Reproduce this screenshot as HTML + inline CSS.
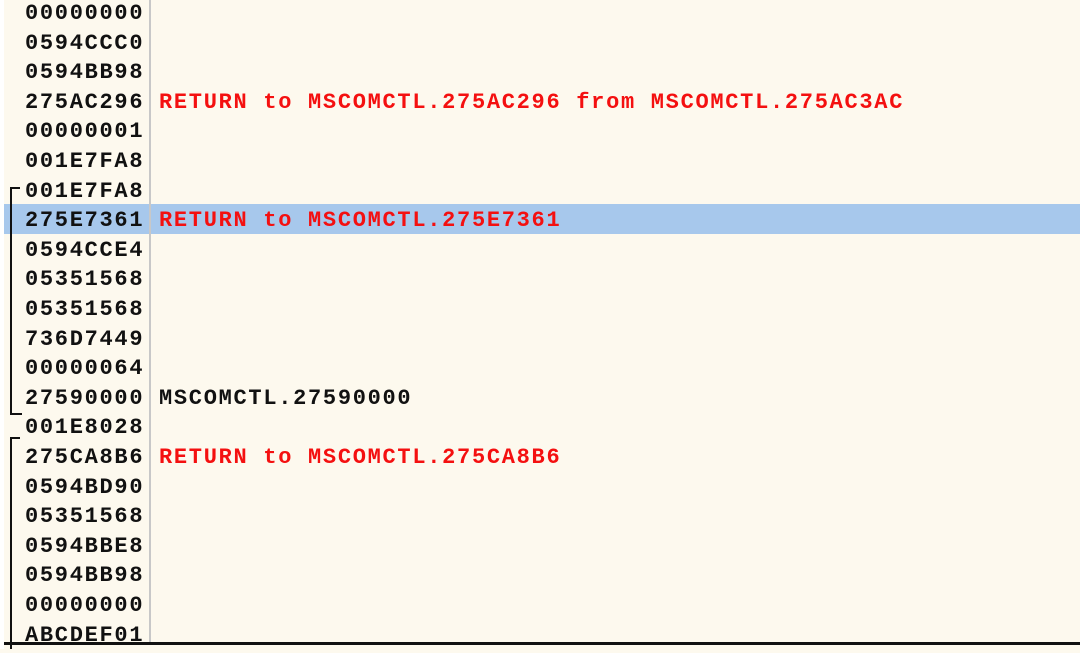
<!DOCTYPE html><html><head><style>
body{margin:0;width:1080px;height:649px;background:#fdf9ee;overflow:hidden;position:relative;font-family:"Liberation Mono",monospace;font-weight:bold;font-size:22px;}
.r{position:absolute;left:0;width:1080px;height:30px;line-height:34px;white-space:pre;letter-spacing:1.7px}
.a{position:absolute;left:25px;color:#111}
.c{position:absolute;left:159px;color:#111}
.red{color:#f41010}
.hl{background:#a7c8ec}
.sep{position:absolute;left:149px;top:0;width:2px;height:642px;background:#c8c8c8}
.b{position:absolute;background:#111}
</style></head><body>
<div class="r" style="top:-3px"><span class="a">00000000</span></div>
<div class="r" style="top:26.6px"><span class="a">0594CCC0</span></div>
<div class="r" style="top:56.2px"><span class="a">0594BB98</span></div>
<div class="r" style="top:85.8px"><span class="a">275AC296</span><span class="c red">RETURN to MSCOMCTL.275AC296 from MSCOMCTL.275AC3AC</span></div>
<div class="r" style="top:115.4px"><span class="a">00000001</span></div>
<div class="r" style="top:145px"><span class="a">001E7FA8</span></div>
<div class="r" style="top:174.6px"><span class="a">001E7FA8</span></div>
<div class="r hl" style="top:204.2px;left:4px;width:1076px;height:30px;overflow:hidden"><span class="a" style="left:21px">275E7361</span><span class="c red" style="left:155px">RETURN to MSCOMCTL.275E7361</span></div>
<div class="r" style="top:233.8px"><span class="a">0594CCE4</span></div>
<div class="r" style="top:263.4px"><span class="a">05351568</span></div>
<div class="r" style="top:293px"><span class="a">05351568</span></div>
<div class="r" style="top:322.6px"><span class="a">736D7449</span></div>
<div class="r" style="top:352.2px"><span class="a">00000064</span></div>
<div class="r" style="top:381.8px"><span class="a">27590000</span><span class="c">MSCOMCTL.27590000</span></div>
<div class="r" style="top:411.4px"><span class="a">001E8028</span></div>
<div class="r" style="top:441px"><span class="a">275CA8B6</span><span class="c red">RETURN to MSCOMCTL.275CA8B6</span></div>
<div class="r" style="top:470.6px"><span class="a">0594BD90</span></div>
<div class="r" style="top:500.2px"><span class="a">05351568</span></div>
<div class="r" style="top:529.8px"><span class="a">0594BBE8</span></div>
<div class="r" style="top:559.4px"><span class="a">0594BB98</span></div>
<div class="r" style="top:589px"><span class="a">00000000</span></div>
<div class="r" style="top:618.6px"><span class="a">ABCDEF01</span></div>
<div class="sep"></div>
<div class="b" style="left:10px;top:187px;width:2px;height:228px"></div>
<div class="b" style="left:10px;top:187px;width:10px;height:2px"></div>
<div class="b" style="left:10px;top:413px;width:12px;height:2px"></div>
<div class="b" style="left:10px;top:437px;width:2px;height:212px"></div>
<div class="b" style="left:10px;top:437px;width:10px;height:2px"></div>
<div class="b" style="left:4px;top:642px;width:1076px;height:3px"></div>
<div style="position:absolute;left:0;top:0;width:4px;height:649px;background:#fff"></div>
</body></html>
